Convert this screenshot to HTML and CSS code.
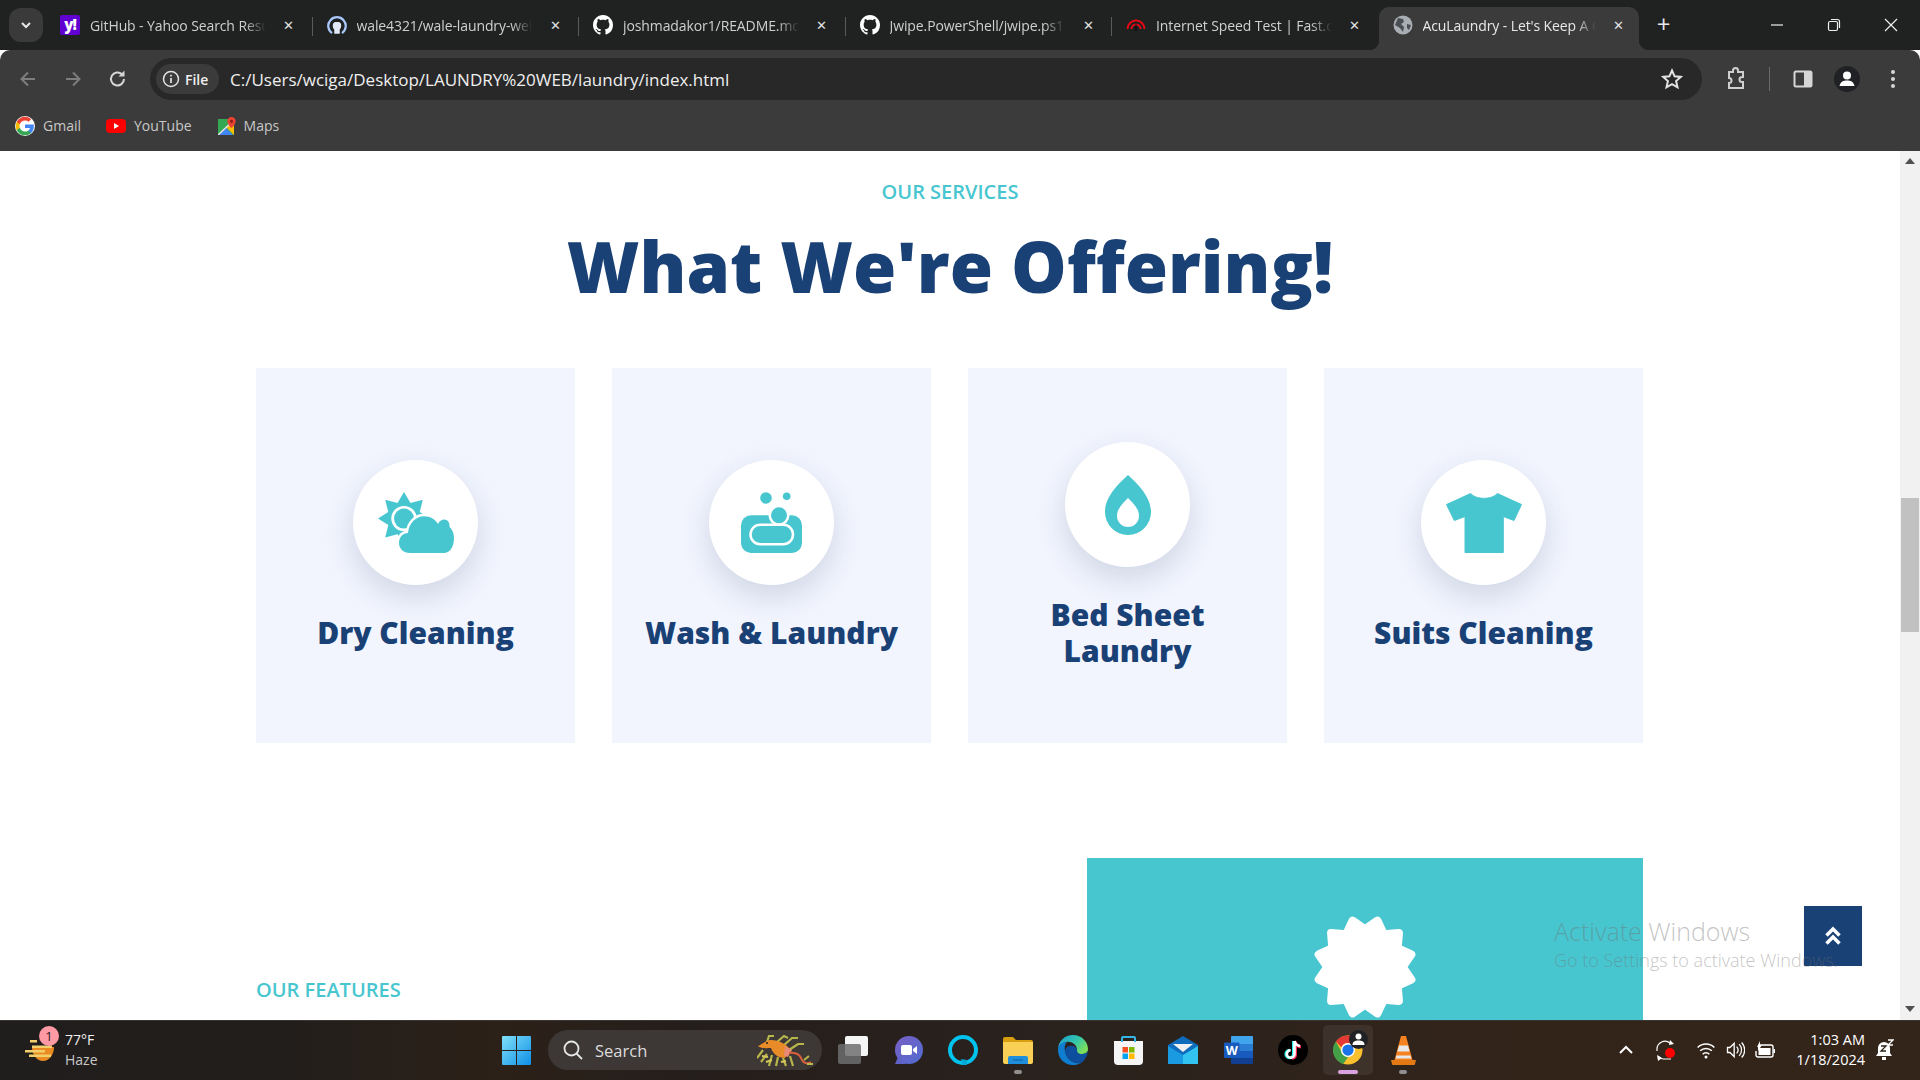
FILE: index.html
```html
<!DOCTYPE html>
<html lang="en">
<head>
    <meta charset="UTF-8">
    <title>AcuLaundry - Let's Keep A Clean</title>
    <link rel="stylesheet" href="styles.css">
</head>
<body>

<!-- browser tabs -->
<div class="tabbar">
    <div class="tab-menu"><svg width="12" height="12" viewBox="0 0 12 12"><path d="M2 4l4 4 4-4" fill="none" stroke="#e8e8e8" stroke-width="2"/></svg></div>
    <div class="tab">
        <span class="yahoo-icon">y!</span>
        <span class="tab-title">GitHub - Yahoo Search Results</span>
        <span class="tab-close">&#10005;</span>
    </div>
    <div class="tab">
        <svg class="tab-icon" viewBox="0 0 16 16"><path d="M4 14.500A7 7 0 1 1 12 14.500" fill="none" stroke="#a8c7fa" stroke-width="1.800"/><path d="M5.800 15V11.500C4.200 10.500 4.200 6.500 6 5.800c1.200-.4 2.800-.4 4 0 1.800.7 1.800 4.700.2 5.700V15z" fill="#e3e9f7"/></svg>
        <span class="tab-title">wale4321/wale-laundry-website</span>
        <span class="tab-close">&#10005;</span>
    </div>
    <div class="tab">
        <svg class="tab-icon" viewBox="0 0 16 16"><path fill="#fff" d="M8 0C3.58 0 0 3.58 0 8c0 3.54 2.29 6.53 5.47 7.59.4.07.55-.17.55-.38 0-.19-.01-.82-.01-1.49-2.01.37-2.53-.49-2.69-.94-.09-.23-.48-.94-.82-1.13-.28-.15-.68-.52-.01-.53.63-.01 1.08.58 1.23.82.72 1.21 1.87.87 2.33.66.07-.52.28-.87.51-1.07-1.78-.2-3.64-.89-3.64-3.95 0-.87.31-1.59.82-2.15-.08-.2-.36-1.02.08-2.12 0 0 .67-.21 2.2.82.64-.18 1.32-.27 2-.27.68 0 1.36.09 2 .27 1.53-1.04 2.2-.82 2.2-.82.44 1.1.16 1.92.08 2.12.51.56.82 1.27.82 2.15 0 3.07-1.87 3.75-3.65 3.95.29.25.54.73.54 1.48 0 1.07-.01 1.93-.01 2.2 0 .21.15.46.55.38A8.013 8.013 0 0016 8c0-4.42-3.58-8-8-8z"/></svg>
        <span class="tab-title">joshmadakor1/README.md at main</span>
        <span class="tab-close">&#10005;</span>
    </div>
    <div class="tab">
        <svg class="tab-icon" viewBox="0 0 16 16"><path fill="#fff" d="M8 0C3.58 0 0 3.58 0 8c0 3.54 2.29 6.53 5.47 7.59.4.07.55-.17.55-.38 0-.19-.01-.82-.01-1.49-2.01.37-2.53-.49-2.69-.94-.09-.23-.48-.94-.82-1.13-.28-.15-.68-.52-.01-.53.63-.01 1.08.58 1.23.82.72 1.21 1.87.87 2.33.66.07-.52.28-.87.51-1.07-1.78-.2-3.64-.89-3.64-3.95 0-.87.31-1.59.82-2.15-.08-.2-.36-1.02.08-2.12 0 0 .67-.21 2.2.82.64-.18 1.32-.27 2-.27.68 0 1.36.09 2 .27 1.53-1.04 2.2-.82 2.2-.82.44 1.1.16 1.92.08 2.12.51.56.82 1.27.82 2.15 0 3.07-1.87 3.75-3.65 3.95.29.25.54.73.54 1.48 0 1.07-.01 1.93-.01 2.2 0 .21.15.46.55.38A8.013 8.013 0 0016 8c0-4.42-3.58-8-8-8z"/></svg>
        <span class="tab-title">Jwipe.PowerShell/jwipe.ps1 at main</span>
        <span class="tab-close">&#10005;</span>
    </div>
    <div class="tab">
        <svg class="tab-icon" viewBox="0 0 20 20"><path d="M1.500 14a8.500 8.500 0 0 1 17 0" fill="none" stroke="#e50914" stroke-width="2"/><path d="M5.500 14a4.500 4.500 0 0 1 9 0" fill="none" stroke="#e50914" stroke-width="2"/><path d="M10 7l1.500 9h-3z" fill="#111"/></svg>
        <span class="tab-title">Internet Speed Test | Fast.com</span>
        <span class="tab-close">&#10005;</span>
    </div>
    <div class="tab active">
        <svg class="tab-icon" viewBox="0 0 20 20"><circle cx="10" cy="10" r="9.500" fill="#a9aeb5"/><path d="M5 3l5 1 1 3-3 2 3 3-1 5-3-4-5-3zM14 9l4 1-2 5-2-2z" fill="#4a4d52"/></svg>
        <span class="tab-title">AcuLaundry - Let's Keep A Clean</span>
        <span class="tab-close">&#10005;</span>
    </div>
    <span class="tab-new">+</span>
    <div class="window-btns">
        <span class="win-btn"><svg width="14" height="14" viewBox="0 0 14 14"><path d="M1 7h12" stroke="#eee" stroke-width="1.200"/></svg></span>
        <span class="win-btn"><svg width="14" height="14" viewBox="0 0 14 14"><rect x="1.500" y="3.500" width="9" height="9" rx="1.500" fill="none" stroke="#eee" stroke-width="1.200"/><path d="M4 1.500h6.500a2 2 0 0 1 2 2V10" fill="none" stroke="#eee" stroke-width="1.200"/></svg></span>
        <span class="win-btn"><svg width="14" height="14" viewBox="0 0 14 14"><path d="M1 1l12 12M13 1L1 13" stroke="#eee" stroke-width="1.200"/></svg></span>
    </div>
</div>

<!-- address bar and bookmarks -->
<div class="toolbar">
    <span class="nav-btn"><svg width="20" height="20" viewBox="0 0 20 20"><path d="M17 10H4M10 3.500L3.500 10l6.500 6.500" fill="none" stroke="#7d7d7d" stroke-width="2"/></svg></span>
    <span class="nav-btn"><svg width="20" height="20" viewBox="0 0 20 20"><path d="M3 10h13M10 3.500l6.500 6.500-6.500 6.500" fill="none" stroke="#7d7d7d" stroke-width="2"/></svg></span>
    <span class="nav-btn"><svg width="20" height="20" viewBox="0 0 20 20"><path d="M16 10a6.500 6.500 0 1 1-2-4.700" fill="none" stroke="#d6d6d6" stroke-width="2"/><path d="M16.500 1.500v6h-6z" fill="#d6d6d6"/></svg></span>
    <div class="omnibox">
        <div class="file-chip">
            <svg width="18" height="18" viewBox="0 0 18 18"><circle cx="9" cy="9" r="7.500" fill="none" stroke="#e3e3e3" stroke-width="1.500"/><path d="M9 8v5M9 4.800v1.700" stroke="#e3e3e3" stroke-width="1.700"/></svg>
            <span>File</span>
        </div>
        <span class="url">C:/Users/wciga/Desktop/LAUNDRY%20WEB/laundry/index.html</span>
        <svg class="star" width="22" height="22" viewBox="0 0 22 22"><path d="M11 2.500l2.600 5.800 6.200.6-4.700 4.200 1.400 6.200L11 16.100l-5.500 3.200 1.400-6.200-4.700-4.200 6.200-.6z" fill="none" stroke="#e3e3e3" stroke-width="2"/></svg>
    </div>
    <svg class="ext-icon" width="24" height="24" viewBox="0 0 24 24"><path d="M9 5V3.500a2.500 2.500 0 0 1 5 0V5h5v5h-1a2.500 2.500 0 0 0 0 5h1v6H5v-5a2.500 2.500 0 0 0 0-5V5z" fill="none" stroke="#cfcfcf" stroke-width="2"/></svg>
    <span class="tool-sep"></span>
    <svg class="panel-icon" width="20" height="20" viewBox="0 0 20 20"><rect x="1.500" y="2.500" width="17" height="15" rx="1.500" fill="none" stroke="#d6d6d6" stroke-width="2"/><rect x="11" y="3" width="7" height="14" fill="#d6d6d6"/></svg>
    <svg class="avatar" width="26" height="26" viewBox="0 0 26 26"><circle cx="13" cy="13" r="13" fill="#202124"/><circle cx="13" cy="9.500" r="4" fill="#fff"/><path d="M5.500 20c1-4.500 4-5.500 7.500-5.500s6.500 1 7.500 5.500z" fill="#fff"/></svg>
    <svg class="dots" width="6" height="20" viewBox="0 0 6 20"><circle cx="3" cy="3" r="2" fill="#d6d6d6"/><circle cx="3" cy="10" r="2" fill="#d6d6d6"/><circle cx="3" cy="17" r="2" fill="#d6d6d6"/></svg>
</div>
<div class="bookmarks">
    <div class="bookmark gmail">
        <svg width="20" height="20" viewBox="-1 -1 26 26"><circle cx="12" cy="12" r="13" fill="#fff"/><path fill="#4285F4" d="M23.490 12.270c0-.79-.07-1.540-.19-2.270H12v4.510h6.470c-.29 1.480-1.140 2.730-2.400 3.580v3h3.860c2.260-2.090 3.560-5.170 3.560-8.820z"/><path fill="#34A853" d="M12 24c3.240 0 5.950-1.080 7.930-2.910l-3.860-3c-1.080.72-2.450 1.160-4.070 1.160-3.130 0-5.780-2.110-6.730-4.960H1.290v3.090C3.260 21.300 7.310 24 12 24z"/><path fill="#FBBC05" d="M5.270 14.290c-.25-.72-.38-1.490-.38-2.290s.14-1.570.38-2.290V6.620H1.290C.47 8.240 0 10.060 0 12s.47 3.760 1.290 5.380l3.980-3.090z"/><path fill="#EA4335" d="M12 4.750c1.770 0 3.350.61 4.600 1.800l3.420-3.420C17.950 1.190 15.240 0 12 0 7.310 0 3.260 2.700 1.290 6.620l3.980 3.090c.95-2.850 3.600-4.960 6.730-4.960z"/></svg>
        <span>Gmail</span>
    </div>
    <div class="bookmark youtube">
        <svg width="20" height="20" viewBox="0 0 20 20"><rect y="3" width="20" height="14" rx="4" fill="#f00"/><path d="M8 7l5 3-5 3z" fill="#fff"/></svg>
        <span>YouTube</span>
    </div>
    <div class="bookmark maps">
        <svg width="18" height="18" viewBox="0 0 18 18"><rect y="2" width="16" height="16" fill="#34a853"/><path d="M1 18l7-7 7 7z" fill="#4285f4"/><path d="M8 10l8-7v15z" fill="#fbbc04"/><path d="M0 18L16 3" stroke="#e6e6e6" stroke-width="1.500"/><path d="M13.500 0A4.200 4.200 0 0 0 9.300 4.200C9.300 7 13.500 11 13.500 11s4.200-4 4.200-6.800A4.200 4.200 0 0 0 13.500 0z" fill="#ea4335"/><circle cx="13.500" cy="4.200" r="1.500" fill="#8c1c13"/></svg>
        <span>Maps</span>
    </div>
</div>

<!-- page -->
<div class="viewport">
    <main class="page">
        <section class="services">
            <p class="eyebrow">OUR SERVICES</p>
            <h1>What We're Offering!</h1>
            <div class="service-row">
                <div class="service-card">
                    <div class="service-icon">
                        <svg width="76" height="61" viewBox="0 0 76 61">
                            <polygon class="teal" points="26,0 32.500,10.900 44.800,7.800 41.700,20.100 52.600,26.600 41.700,33.100 44.800,45.400 32.500,42.300 26,53.200 19.500,42.300 7.200,45.400 10.300,33.100 0,26.600 10.300,20.100 7.200,7.800 19.500,10.900"/>
                            <circle cx="26" cy="26.600" r="12.700" fill="#fff"/>
                            <circle cx="26" cy="26.600" r="10" class="teal"/>
                            <path class="teal cloud" d="M32 61C25 61 21 56 21 51C21 45 25 41 30 41C31 31 38 24.300 46 24.300C52 24.300 57 27 60 32C61 29 64 27.500 66 27.500C70 27.500 72 31 71.500 35C74 37 76 41 76 46C76 56 71 61 66 61Z"/>
                        </svg>
                    </div>
                    <h3>Dry Cleaning</h3>
                </div>
                <div class="service-card">
                    <div class="service-icon">
                        <svg width="61" height="61" viewBox="0 0 61 61">
                            <rect y="23.300" width="61" height="37.700" rx="10" class="teal"/>
                            <rect x="9.500" y="32.800" width="42.500" height="19.500" rx="9.700" fill="none" stroke="#fff" stroke-width="2.500"/>
                            <circle cx="38" cy="23.300" r="10.500" fill="#fff"/>
                            <circle cx="38" cy="23.300" r="8" class="teal"/>
                            <circle cx="25" cy="6" r="5.800" class="teal"/>
                            <circle cx="45.700" cy="4.300" r="3.800" class="teal"/>
                        </svg>
                    </div>
                    <h3>Wash &amp; Laundry</h3>
                </div>
                <div class="service-card">
                    <div class="service-icon">
                        <svg width="46" height="60" viewBox="0 0 46 60">
                            <path class="teal" fill-rule="evenodd" d="M23 0C30 7 46 20 46 37A23 23 0 0 1 0 37C0 20 16 7 23 0ZM23 23C19 27 12 33 12 41A11 11 0 0 0 34 41C34 33 27 27 23 23Z"/>
                        </svg>
                    </div>
                    <h3>Bed Sheet Laundry</h3>
                </div>
                <div class="service-card">
                    <div class="service-icon">
                        <svg width="76" height="60" viewBox="0 0 76 60">
                            <path class="teal" d="M24.700 0.500C30 7 46 7 51.300 0.500L75.500 11.500 68 27.500 57.300 23.500V59.500H19V23.500L8.300 27.500 0.500 11.500Z" stroke="#48c6d0" stroke-linejoin="round"/>
                        </svg>
                    </div>
                    <h3>Suits Cleaning</h3>
                </div>
            </div>
        </section>

        <section class="features">
            <div class="features-text">
                <p class="eyebrow">OUR FEATURES</p>
            </div>
            <div class="features-panel">
                <svg width="104" height="104" viewBox="0 0 102 102"><polygon fill="#fff" stroke="#fff" stroke-width="8" stroke-linejoin="round" points="51,14 63.200,5.600 69.500,19 84.200,17.800 83,32.500 96.400,38.800 88,51 96.400,63.200 83,69.500 84.200,84.200 69.500,83 63.200,96.400 51,88 38.800,96.400 32.500,83 17.800,84.200 19,69.500 5.600,63.200 14,51 5.600,38.800 19,32.500 17.800,17.800 32.500,19 38.800,5.600"/></svg>
            </div>
        </section>

        <a class="back-top" href="#"><svg width="18" height="20" viewBox="0 0 18 20"><path d="M2.500 9.500L9 3l6.500 6.500M2.500 17.500L9 11l6.500 6.500" fill="none" stroke="#fff" stroke-width="3.500"/></svg></a>
        <div class="watermark">
            <p class="wm-title">Activate Windows</p>
            <p class="wm-sub">Go to Settings to activate Windows.</p>
        </div>
    </main>
    <div class="scrollbar">
        <span class="arrow-up"></span>
        <span class="thumb"></span>
        <span class="arrow-down"></span>
    </div>
</div>

<!-- windows taskbar -->
<footer class="taskbar">
    <div class="weather">
        <div class="weather-icon">
            <svg width="30" height="27" viewBox="0 0 30 27"><path d="M7 12h22a11 14 0 0 1-22 0z" fill="#ea8a22"/><path d="M0 15h20v2.500H0zM4 19.500h22V22H4zM7 10.500h20V13H7zM5 5h7v2.500H5z" fill="#f3cf6b"/></svg>
            <span class="weather-badge">1</span>
        </div>
        <div class="weather-text">
            <span class="temp">77&deg;F</span>
            <span class="cond">Haze</span>
        </div>
    </div>
    <svg class="start" width="29" height="29" viewBox="0 0 29 29"><defs><linearGradient id="win" x1="0" y1="0" x2="1" y2="1"><stop offset="0" stop-color="#7fe0f7"/><stop offset="1" stop-color="#0f8fe8"/></linearGradient></defs><path d="M0 1a1 1 0 0 1 1-1h13v14H0zM15 0h13a1 1 0 0 1 1 1v13H15zM0 15h14v14H1a1 1 0 0 1-1-1zM15 15h14v13a1 1 0 0 1-1 1H15z" fill="url(#win)"/></svg>
    <div class="searchbox">
        <svg width="22" height="22" viewBox="0 0 22 22"><circle cx="9.500" cy="9.500" r="7" fill="none" stroke="#e6e6e6" stroke-width="1.800"/><path d="M14.500 14.500L20 20" stroke="#e6e6e6" stroke-width="1.800"/></svg>
        <span>Search</span>
        <svg class="seadragon" width="57" height="33" viewBox="0 0 57 33">
            <g fill="none" stroke="#b8b64a" stroke-width="2.200">
                <path d="M10 8l2-6 5 0M20 8l7-6 4 2M27 11l8-7 6 0M32 16l9-6 6 0M6 16L0 24M10 20L4 28M15 21l-3 11M21 23l-2 9M26 24l3 8M33 22l3 10"/>
                <path d="M15 26l-6 2M24 28l5-1M5 22l6 1" stroke="#d4c85a"/>
            </g>
            <path d="M1 12C6 10 9 6 14 6C22 6 29 10 33 15L28 24C21 24 16 20 14 14C10 14 5 15 1 12Z" fill="#ea8b2a"/>
            <path d="M28 12l7 4-4 7-4-1z" fill="#e78a78"/>
            <path d="M32 19C39 18 43 20 45 26C47 30 51 30 54 28" fill="none" stroke="#d65f3e" stroke-width="2"/>
            <path d="M47 26l5-4M50 30l6 0" stroke="#b8b64a" stroke-width="2"/>
            <circle cx="10" cy="9" r="1" fill="#222"/>
        </svg>
    </div>
    <div class="apps">
        <div class="app">
            <svg width="30" height="28" viewBox="0 0 30 28"><rect x="7" width="23" height="20" rx="2" fill="#f5f5f5"/><rect y="8" width="23" height="20" rx="2" fill="#6e6e6e" fill-opacity=".85"/></svg>
        </div>
        <div class="app">
            <svg width="29" height="28" viewBox="0 0 29 28"><defs><linearGradient id="meet" x1="0" y1="0" x2="1" y2="1"><stop offset="0" stop-color="#7a5fc4"/><stop offset="1" stop-color="#4f6bd0"/></linearGradient></defs><circle cx="15" cy="14" r="14" fill="url(#meet)"/><path d="M4 21L1 28h11z" fill="#5f63c8"/><rect x="7" y="9" width="11" height="10" rx="2" fill="#fff"/><path d="M19 13l4-3v8l-4-3z" fill="#fff"/></svg>
        </div>
        <div class="app">
            <svg width="30" height="30" viewBox="0 0 30 30"><circle cx="15" cy="15" r="13" fill="none" stroke="#00c3ee" stroke-width="4"/><path d="M13 24l6 1v5h-4z" fill="#00a8d6"/></svg>
        </div>
        <div class="app has-dot">
            <svg width="30" height="27" viewBox="0 0 30 27"><path d="M0 2a2 2 0 0 1 2-2h8l3 3h15a2 2 0 0 1 2 2v4H0z" fill="#d99f0e"/><path d="M0 5h30v20a2 2 0 0 1-2 2H2a2 2 0 0 1-2-2z" fill="#f9cf55"/><path d="M5 21a2 2 0 0 1 2-2h16a2 2 0 0 1 2 2v6H5z" fill="#1f8fdc"/><path d="M10 23h10" stroke="#0f5f9e" stroke-width="1"/></svg>
        </div>
        <div class="app">
            <svg width="30" height="30" viewBox="0 0 30 30"><defs><linearGradient id="edge" x1="0" y1="0" x2="1" y2=".6"><stop offset="0" stop-color="#1a9bd7"/><stop offset=".6" stop-color="#34c6a8"/><stop offset="1" stop-color="#7ee05a"/></linearGradient></defs><path d="M15 0C24 0 30 7 30 14C30 18 27 19 23 19C19 19 19 17 19 15C19 9 13 6 8 7C3 8 0 12 0 15C0 6 7 0 15 0Z" fill="url(#edge)"/><path d="M0 15C0 10 4 7 9 7C7 9 6 12 7 16C8 24 15 29 23 28C20 29.500 18 30 15 30C6 30 0 23 0 15Z" fill="#0f7dd0"/><path d="M9 12C14 9 19 12 19 15C19 18 21 19 24 19C27 19 29 18 30 16C29 22 26 26 23 28C15 29 8 24 7 16C7 14 8 13 9 12Z" fill="#0d4f9e"/></svg>
        </div>
        <div class="app">
            <svg width="29" height="29" viewBox="0 0 29 29"><path d="M0 5h29v20a4 4 0 0 1-4 4H4a4 4 0 0 1-4-4z" fill="#f5f5f5"/><path d="M8 6V2a1 1 0 0 1 1-1h11a1 1 0 0 1 1 1v4" fill="none" stroke="#35b6e8" stroke-width="2"/><rect x="8.500" y="11" width="5.500" height="5.500" fill="#f25022"/><rect x="15" y="11" width="5.500" height="5.500" fill="#7fba00"/><rect x="8.500" y="17.500" width="5.500" height="5.500" fill="#00a4ef"/><rect x="15" y="17.500" width="5.500" height="5.500" fill="#ffb900"/></svg>
        </div>
        <div class="app">
            <svg width="30" height="28" viewBox="0 0 30 28"><path d="M0 9L15 0l15 9v3L15 21 0 12z" fill="#0f6cbd"/><path d="M5 8h20l-10 8z" fill="#f0f0f0"/><path d="M0 10l15 9v9H0z" fill="#1a9ae0"/><path d="M30 10L15 19v9h15z" fill="#33c3f0"/></svg>
        </div>
        <div class="app">
            <svg width="29" height="28" viewBox="0 0 29 28"><path d="M7 1a1 1 0 0 1 1-1h20a1 1 0 0 1 1 1v7H7z" fill="#41a5ee"/><rect x="7" y="8" width="22" height="7" fill="#2b7cd3"/><rect x="7" y="15" width="22" height="7" fill="#185abd"/><path d="M7 22h22v5a1 1 0 0 1-1 1H8a1 1 0 0 1-1-1z" fill="#103f91"/><rect y="6.500" width="15.500" height="15.500" rx="1" fill="#185abd"/><text x="7.700" y="19" class="word-w">W</text></svg>
        </div>
        <div class="app">
            <svg width="30" height="30" viewBox="0 0 30 30"><circle cx="15" cy="15" r="15" fill="#000"/><path d="M15.500 6v13a3.800 3.800 0 1 1-3.800-3.800" fill="none" stroke="#25f4ee" stroke-width="3"/><path d="M17.500 6.500v13a3.800 3.800 0 0 1-3.500 3.700M17.500 7c.5 3 2.500 4.500 5.500 5" fill="none" stroke="#fe2c55" stroke-width="3"/><path d="M16.500 6v13a3.800 3.800 0 1 1-3.800-3.800M16.500 6c.5 3 2.500 4.500 5.500 5" fill="none" stroke="#fff" stroke-width="2.600"/></svg>
        </div>
        <div class="app app-active">
            <svg class="chrome-logo" width="30" height="30" viewBox="0 0 32 32"><circle cx="16" cy="16" r="15.500" fill="#fbc02d"/><path d="M16 .5A15.500 15.500 0 0 1 29.400 8.500H16a7.500 7.500 0 0 0-7 4.500L3 7A15.500 15.500 0 0 1 16 .5z" fill="#e53935"/><path d="M3 7l6.500 11.500a7.500 7.500 0 0 0 6.500 5L11 31A15.500 15.500 0 0 1 3 7z" fill="#43a047"/><circle cx="16" cy="16" r="7.500" fill="#fff"/><circle cx="16" cy="16" r="6" fill="#1a73e8"/></svg>
            <svg class="chrome-badge" width="19" height="19" viewBox="0 0 19 19"><circle cx="9.500" cy="9.500" r="9.500" fill="#202124"/><circle cx="9.500" cy="6.500" r="3" fill="#fff"/><path d="M3.500 15c0-3.500 2.500-4.500 6-4.500s6 1 6 4.500z" fill="#fff"/></svg>
        </div>
        <div class="app has-dot">
            <svg width="25" height="29" viewBox="0 0 25 29"><path d="M3.500 24L10 0h5l6.500 24z" fill="#f58220"/><path d="M8 9.500h9l1.500 6h-12z" fill="#e8e8e8"/><path d="M5.500 19.500h14l.8 3H4.700z" fill="#e8e8e8"/><path d="M0 24h25l-1 4a1 1 0 0 1-1 1H2a1 1 0 0 1-1-1z" fill="#e57a15"/></svg>
        </div>
    </div>
    <div class="tray">
        <svg class="tray-chevron" width="16" height="10" viewBox="0 0 16 10"><path d="M2 8l6-6 6 6" fill="none" stroke="#fff" stroke-width="2"/></svg>
        <svg class="tray-sync" width="20" height="22" viewBox="0 0 20 22"><path d="M1 12V10a8 8 0 0 1 13-6M15 20H8a7 7 0 0 1-6-3" fill="none" stroke="#fff" stroke-width="1.200"/><path d="M14 1l4 4-5 1zM1 16l5 3-4 3z" fill="#fff"/><circle cx="14" cy="14" r="5" fill="#f00"/></svg>
        <svg class="tray-wifi" width="20" height="20" viewBox="0 0 24 24"><path d="M2 9a14 14 0 0 1 20 0M5 13a10 10 0 0 1 14 0M8 17a5.500 5.500 0 0 1 8 0" fill="none" stroke="#fff" stroke-width="1.800"/><circle cx="12" cy="20.500" r="1.800" fill="#fff"/></svg>
        <svg class="tray-volume" width="20" height="20" viewBox="0 0 22 24"><path d="M2 9h3l5-5v16l-5-5H2z" fill="none" stroke="#fff" stroke-width="1.600"/><path d="M13 8a6 6 0 0 1 0 8M16 5a10 10 0 0 1 0 14M19 3a13 13 0 0 1 0 18" fill="none" stroke="#fff" stroke-width="1.500"/></svg>
        <svg class="tray-battery" width="20" height="20" viewBox="0 0 20 20"><path d="M5 5h11a2 2 0 0 1 2 2v8a2 2 0 0 1-2 2H3a2 2 0 0 1-2-2v-4" fill="none" stroke="#fff" stroke-width="1.400"/><rect x="3.500" y="8" width="12" height="7" fill="#fff"/><rect x="18.500" y="9" width="1.500" height="4" fill="#fff"/><path d="M2 7L5 1v4h2L3 11V7z" fill="#fff"/></svg>
        <div class="clock">
            <span>1:03 AM</span>
            <span>1/18/2024</span>
        </div>
        <svg class="tray-bell" width="18" height="22" viewBox="0 0 18 22"><path d="M8 3a6 6 0 0 1 6 6v5l2 3H0l2-3V9a6 6 0 0 1 6-6z" fill="#fff"/><path d="M6 18h4v3H6z" fill="#fff"/><path d="M12 1h5l-5 5h5" fill="none" stroke="#fff" stroke-width="1.300"/><path d="M5 7h5l-5 5h5" fill="none" stroke="#2f2419" stroke-width="1.300"/></svg>
    </div>
</footer>

</body>
</html>
```

FILE: styles.css
```css
:root {
    --teal: #48c6d0;
    --navy: #1a4175;
    --chrome: #3b3b3b;
    --ui-font: "Open Sans", "Noto Sans", sans-serif;
}

* {
    box-sizing: border-box;
}

body {
    margin: 0;
    width: 1920px;
    height: 1080px;
    overflow: hidden;
    display: flex;
    flex-direction: column;
    font-family: var(--ui-font);
    background: #fff;
}

p, h1, h3 {
    margin: 0;
}

.teal {
    fill: var(--teal);
}

/* tabs */
.tabbar {
    height: 50px;
    flex: none;
    display: flex;
    align-items: flex-end;
    background: #202222;
    color: #cfcfcf;
    font-size: 14px;
    position: relative;
}

.tab-menu {
    position: absolute;
    left: 9px;
    top: 8px;
    width: 34px;
    height: 34px;
    border-radius: 12px;
    background: #3a3a3a;
    display: flex;
    align-items: center;
    justify-content: center;
}

.tab {
    flex: none;
    width: 266.5px;
    height: 43px;
    display: flex;
    align-items: center;
    gap: 10px;
    padding: 0 17px 7px 14px;
    position: relative;
}

.tabbar .tab:nth-child(2) {
    margin-left: 46px;
}

.tab:not(.active):not(:nth-child(6))::after {
    content: "";
    position: absolute;
    right: 0;
    top: 10px;
    height: 19px;
    width: 1px;
    background: #5a5a5a;
}

.tab.active {
    width: 260px;
    background: var(--chrome);
    border-radius: 10px 10px 0 0;
    color: #e8e8e8;
    padding-right: 13px;
}

.tab.active::before,
.tab.active::after {
    content: "";
    position: absolute;
    bottom: 0;
    width: 10px;
    height: 10px;
}

.tab.active::before {
    left: -10px;
    background: radial-gradient(circle at 0 0, #202222 10px, var(--chrome) 10.500px);
}

.tab.active::after {
    right: -10px;
    background: radial-gradient(circle at 100% 0, #202222 10px, var(--chrome) 10.500px);
}

.tab-icon,
.yahoo-icon {
    width: 20px;
    height: 20px;
    flex: none;
}

.yahoo-icon {
    background: #5f01d1;
    color: #fff;
    border-radius: 2px;
    font-weight: 800;
    font-size: 15px;
    line-height: 18px;
    text-align: center;
    letter-spacing: -1px;
}

.tab-title {
    flex: 1;
    white-space: nowrap;
    overflow: hidden;
    letter-spacing: -0.1px;
    -webkit-mask-image: linear-gradient(90deg, #000 88%, transparent);
    mask-image: linear-gradient(90deg, #000 88%, transparent);
}

.tab-close {
    flex: none;
    width: 14px;
    margin-left: 6px;
    text-align: center;
    font-size: 13px;
    color: #e0e0e0;
}

.tab-new {
    width: 20px;
    margin-left: 15px;
    height: 43px;
    font-size: 24px;
    line-height: 34px;
    text-align: center;
    color: #e8e8e8;
}

.window-btns {
    margin-left: auto;
    align-self: stretch;
    display: flex;
    padding-right: 0.5px;
}

.win-btn {
    width: 57px;
    display: flex;
    align-items: center;
    justify-content: center;
}

/* toolbar */
.toolbar {
    height: 50px;
    flex: none;
    display: flex;
    align-items: flex-start;
    padding: 8px 0 0 5px;
    background: var(--chrome);
    border-radius: 10px 10px 0 0;
}

.nav-btn {
    width: 45px;
    height: 42px;
    flex: none;
    display: flex;
    align-items: center;
    justify-content: center;
}

.omnibox {
    margin-left: 10px;
    width: 1552px;
    height: 42px;
    flex: none;
    border-radius: 21px;
    background: #282828;
    display: flex;
    align-items: center;
    padding: 0 19px 0 6px;
    color: #efefef;
}

.file-chip {
    width: 63px;
    height: 30px;
    border-radius: 15px;
    background: var(--chrome);
    display: flex;
    align-items: center;
    gap: 5px;
    padding-left: 6px;
    font-size: 14px;
    font-weight: 600;
}

.url {
    margin-left: 11px;
    font-size: 17px;
}

.star {
    margin-left: auto;
}

.ext-icon {
    margin: 9px 0 0 22px;
    flex: none;
}

.tool-sep {
    margin: 9px 0 0 21px;
    width: 1px;
    height: 24px;
    background: #6a6a6a;
    flex: none;
}

.panel-icon {
    margin: 11px 0 0 23px;
    flex: none;
}

.avatar {
    margin: 8px 0 0 21px;
    flex: none;
}

.dots {
    margin: 11px 0 0 30px;
    flex: none;
}

/* bookmarks */
.bookmarks {
    height: 51px;
    flex: none;
    background: var(--chrome);
    display: flex;
    align-items: center;
    padding: 0 0 0 15px;
    color: #c8c8c8;
    font-size: 14px;
}

.bookmark {
    display: flex;
    align-items: center;
    gap: 8px;
}

.youtube {
    margin-left: 25px;
}

.maps {
    margin-left: 26px;
}

/* page */
.viewport {
    flex: 1;
    min-height: 0;
    display: flex;
    overflow: hidden;
}

.page {
    flex: 1;
    position: relative;
    overflow: hidden;
    padding-top: 27px;
}

.eyebrow {
    font-size: 20px;
    line-height: 28px;
    font-weight: 600;
    color: var(--teal);
}

.services {
    text-align: center;
}

h1 {
    margin-top: 17px;
    font-size: 70px;
    line-height: 86px;
    font-weight: 800;
    color: var(--navy);
}

.service-row {
    margin: 59px 0 0 256px;
    display: grid;
    grid-template-columns: repeat(4, 319px);
    gap: 37px;
}

.service-card {
    height: 375px;
    background: #f2f5fe;
    display: flex;
    flex-direction: column;
    align-items: center;
    justify-content: center;
    padding: 0 30px;
}

.service-icon {
    width: 125px;
    height: 125px;
    flex: none;
    border-radius: 50%;
    background: #fff;
    box-shadow: 0 12px 30px rgba(30, 50, 100, 0.16);
    display: flex;
    align-items: center;
    justify-content: center;
}

.service-card h3 {
    margin-top: 30px;
    font-size: 30px;
    line-height: 36px;
    font-weight: 800;
    color: var(--navy);
}

.cloud {
    stroke: #fff;
    stroke-width: 5;
    paint-order: stroke;
}

.features {
    width: 1387px;
    margin: 115px 0 0 256px;
    display: flex;
}

.features-text {
    flex: 1;
    padding-top: 118px;
}

.features-panel {
    width: 556px;
    height: 400px;
    background: var(--teal);
    display: flex;
    flex-direction: column;
    align-items: center;
    padding-top: 57px;
}

.back-top {
    position: absolute;
    left: 1804px;
    top: 755px;
    width: 58px;
    height: 60px;
    background: var(--navy);
    display: flex;
    align-items: center;
    justify-content: center;
}

.watermark {
    position: absolute;
    left: 1554px;
    top: 763px;
    color: rgba(110, 110, 110, 0.42);
    font-weight: 300;
    white-space: nowrap;
}

.wm-title {
    font-size: 25px;
    line-height: 34px;
}

.wm-sub {
    font-size: 18px;
    line-height: 24px;
}

/* scrollbar */
.scrollbar {
    width: 20px;
    flex: none;
    background: #f1f1f1;
    position: relative;
}

.thumb {
    position: absolute;
    left: 1px;
    right: 1px;
    top: 347px;
    height: 134px;
    background: #c1c1c1;
}

.arrow-up,
.arrow-down {
    position: absolute;
    left: 5px;
    width: 0;
    height: 0;
    border-left: 5px solid transparent;
    border-right: 5px solid transparent;
}

.arrow-up {
    top: 7px;
    border-bottom: 6px solid #505050;
}

.arrow-down {
    bottom: 8px;
    border-top: 6px solid #505050;
}

/* taskbar */
.taskbar {
    height: 60px;
    flex: none;
    position: relative;
    display: flex;
    align-items: center;
    padding: 0 25px 0 25px;
    color: #f2f2f2;
    font-size: 14px;
    background: linear-gradient(90deg, #201e1d 0%, #221e1b 15%, #2c2118 26%, #241e1c 36%, #2a221d 55%, #33241a 80%, #34251b 100%);
    box-shadow: inset 0 1px 0 #3a3532;
}

.weather {
    width: 477px;
    display: flex;
    align-items: center;
    gap: 10px;
}

.weather-icon {
    width: 30px;
    position: relative;
}

.weather-badge {
    position: absolute;
    right: -4px;
    top: -9px;
    width: 20px;
    height: 20px;
    border-radius: 50%;
    background: #ff99a4;
    color: #1d1d1d;
    font-size: 13px;
    line-height: 20px;
    text-align: center;
}

.weather-text,
.clock {
    display: flex;
    flex-direction: column;
    line-height: 20px;
}

.cond {
    color: #c8c8c8;
}

.start {
    flex: none;
}

.searchbox {
    width: 274px;
    height: 40px;
    margin-left: 17px;
    border-radius: 20px;
    background: #3d3835;
    display: flex;
    align-items: center;
    gap: 11px;
    padding: 0 8px 0 14px;
    font-size: 16.500px;
    color: #dcdcdc;
}

.seadragon {
    margin-left: auto;
}

.apps {
    margin-left: 16px;
    display: flex;
    gap: 25px;
    align-items: center;
}

.app {
    width: 30px;
    height: 32px;
    position: relative;
    display: flex;
    align-items: center;
    justify-content: center;
}

.has-dot::after {
    content: "";
    position: absolute;
    left: 11px;
    bottom: -8px;
    width: 8px;
    height: 4px;
    border-radius: 2px;
    background: #8f8f8f;
}

.app-active::before {
    content: "";
    position: absolute;
    left: -10px;
    right: -10px;
    top: -9px;
    bottom: -9px;
    border-radius: 5px;
    background: rgba(255, 255, 255, 0.07);
}

.app-active::after {
    content: "";
    position: absolute;
    left: 5px;
    bottom: -8px;
    width: 20px;
    height: 4px;
    border-radius: 2px;
    background: #d8a2e0;
}

.chrome-logo {
    position: relative;
}

.chrome-badge {
    position: absolute;
    right: -5px;
    top: -4px;
}

.word-w {
    font-family: "Open Sans", sans-serif;
    font-size: 12.500px;
    font-weight: 700;
    fill: #fff;
    text-anchor: middle;
}

.tray {
    margin-left: auto;
    display: flex;
    align-items: center;
}

.tray-sync {
    margin-left: 22px;
}

.tray-wifi {
    margin-left: 20px;
}

.tray-volume {
    margin-left: 9px;
}

.tray-battery {
    margin-left: 10px;
}

.clock {
    width: 90px;
    align-items: flex-end;
    text-align: right;
    font-size: 14.500px;
    color: #fff;
}

.tray-bell {
    margin-left: 11px;
    margin-right: 1px;
}
```
